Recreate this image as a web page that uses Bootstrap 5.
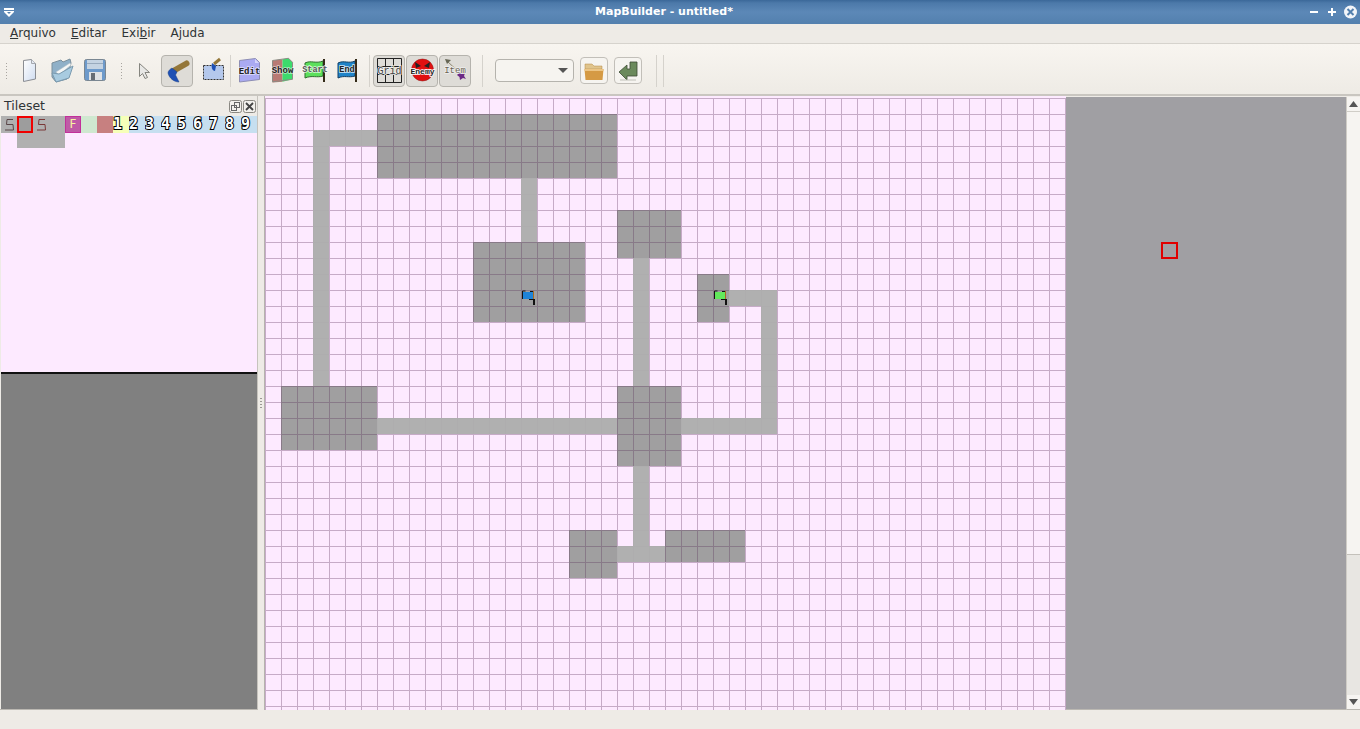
<!DOCTYPE html>
<html lang="pt-BR">
<head>
  <meta charset="UTF-8">
  <title>MapBuilder - untitled*</title>
  <link rel="stylesheet" href="https://cdn.jsdelivr.net/npm/bootstrap@5.3.0/dist/css/bootstrap.min.css">
  <style>
    html, body { height: 100%; overflow: hidden; }
    body { background: #eeebe6; color: #2e3436; font-family: "DejaVu Sans", sans-serif; font-size: 12px; }
    .app-shell { width: 1360px; height: 729px; }

    .title-bar { height: 24px; background: linear-gradient(#3b6899 0, #4c79a9 3px, #5c88b7 12px, #5380ae 24px); color: #fff; font-weight: 700; font-size: 11px; }
    .title-left { width: 18px; }
    .title-right { width: 50px; }
    .menu-bar { height: 20px; padding-left: 2.5px; border-bottom: 1px solid #d6d3cd; }
    .menu-item { padding: 0 7.5px; color: #2e3436; line-height: 19px; }

    .tool-bar { height: 52px; padding: 11px 0 8px 5px; background: linear-gradient(#f8f5f0, #eeebe5); border-bottom: 2px solid #c9c6c0; }
    .tool-bar text { font-family: "Liberation Mono", monospace; text-anchor: middle; stroke-width: 1.5px; paint-order: stroke; }
    .grip { width: 4px; height: 18px; margin-top: 1px; background-image: radial-gradient(#a8a5a0 0.7px, transparent 0.8px); background-size: 3px 3px; }
    .slot { width: 33px; height: 32px; flex: none; }
    .slot svg { display: block; }
    .slot-on { width: 32px; margin-right: 1px; background: #dedcd7; border: 1px solid #b5b3ad; border-radius: 4px; box-sizing: border-box; }
    .slot-on svg { margin: -1px; }
    .sep { width: 1px; height: 32px; background: #d5d2cc; flex: none; }
    .sep-edit { margin-left: 3px; margin-right: 3px; }
    .sep-grid { margin-left: 3px; margin-right: 3px; }
    .sep-combo { margin-left: 10px; margin-right: 12px; }
    .sep-last { margin-left: 14px; margin-right: 6px; }
    .combo-btn { width: 79px; height: 23px; flex: none; padding: 0 5px 0 0; background: #f6f4f0; border: 1px solid #b5b3ad; border-radius: 4px; font-size: 12px; color: #444; }
    .combo-btn:hover { background: #f6f4f0; border-color: #b5b3ad; }
    .combo-btn::after { border-top-color: #555; border-width: 5px 5px 0; margin: 0; }
    .tool-push { width: 28px; height: 27px; flex: none; margin-left: 6px; background: #f6f4f0; border: 1px solid #c2bfb9; border-radius: 4px; }

    .work-area { height: 614px; }
    .side-pane { width: 258px; flex: none; border-right: 1px solid #c6c3bd; border-bottom: 1px solid #bbb8b2; }
    .pane-head { height: 20px; padding: 0 1px 0 4px; font-size: 12.5px; }
    .pane-tiles { height: 258px; background: #fdeaff; margin-left: 1px; border-bottom: 2px solid #111; }
    .tile-row { height: 17px; background: #c6dff0; }
    .tile-cell { width: 16px; height: 17px; flex: none; font: 700 15px/17px "DejaVu Sans Mono", monospace; color: #fff; -webkit-text-stroke: 2px #000; paint-order: stroke fill; overflow: hidden; }
    .tile-grey { background: #b0b0b0; }
    .tile-picked { background: #9d9d9d; border: 2px solid #f00000; }
    .tile-f { background: #bf5aa6; border: 1px solid #c2309a; color: #f6f7a0; -webkit-text-stroke: 0; font: 400 12px/15px "DejaVu Sans", sans-serif; text-align: center; }
    .tile-green { background: #cfe8d0; }
    .tile-rose { background: #c78080; }
    .tile-yellow { background: #f6ffb8; }
    .tile-under { width: 48px; height: 15px; margin-left: 16px; background: #b0b0b0; }
    .pane-dark { background: #808080; margin-left: 1px; }
    .split-bar { width: 6px; flex: none; }
    .split-dots { width: 2px; height: 12px; background-image: radial-gradient(#9c9994 0.7px, transparent 0.8px); background-size: 2px 3px; }
    .map-box { width: 802px; flex: none; padding-top: 1px; border-left: 1px solid #b5b3ad; background: #fdeaff; }
    .map-box svg { display: block; margin-top: 1px; }
    .void-area { width: 280px; flex: none; margin-top: 1px; background: #a09fa3; border-bottom: 1px solid #bbb8b2; }
    .cursor-box { left: 95px; top: 145px; width: 17px; height: 17px; border: 2px solid #e00000; }
    .scroll-col { width: 14px; flex: none; margin-top: 1px; background: #e8e6e2; border-left: 1px solid #cfccc6; border-bottom: 1px solid #bbb8b2; }
    .scroll-end { height: 14px; background: #f6f4f1; }
    .scroll-thumb { height: 444px; background: #f6f4f1; border-top: 1px solid #d0cdc7; border-bottom: 1px solid #c4c1bb; }
    .status-bar { height: 19px; }
  </style>
</head>
<body>
<div class="app-shell d-flex flex-column">

  <!-- window title -->
  <div class="title-bar d-flex align-items-center">
    <div class="title-left d-flex justify-content-center">
      <svg width="10" height="9" viewBox="0 0 10 9"><path d="M0 0h10v2H0zM0 3h10v1L5 9 0 4z" fill="#fff"/><path d="M3 4h4L5 6z" fill="#5380ae"/></svg>
    </div>
    <div class="flex-grow-1 text-center">MapBuilder - untitled*</div>
    <div class="title-right d-flex align-items-center">
      <svg width="50" height="14" viewBox="0 0 50 14">
        <path d="M0 6h8v2H0zM18 6h8v2h-8zM21 3h2v8h-2z" fill="#fff"/>
        <circle cx="40.500" cy="7" r="6.500" fill="#f2f5f9"/>
        <path d="M37.500 4l6 6M43.500 4l-6 6" stroke="#5380ae" stroke-width="2"/>
      </svg>
    </div>
  </div>

  <!-- menu -->
  <nav class="menu-bar d-flex">
    <span class="menu-item"><u>A</u>rquivo</span>
    <span class="menu-item"><u>E</u>ditar</span>
    <span class="menu-item">Exi<u>b</u>ir</span>
    <span class="menu-item">A<u>j</u>uda</span>
  </nav>

  <!-- toolbar -->
  <div class="tool-bar d-flex align-items-center">
    <div class="grip"></div>
    <div class="slot ms-1">
      <svg width="33" height="32"><defs><linearGradient id="pg" x1="0" y1="0" x2="1" y2="1"><stop offset="0" stop-color="#fff"/><stop offset="1" stop-color="#cfdcf0"/></linearGradient></defs>
        <path d="M10.500 5.500l8-1 4 4v15.500l-12 2.500z" fill="url(#pg)" stroke="#8a8d93"/><path d="M18.500 4.500v4h4" fill="#e4e9f2" stroke="#a5a8ae"/></svg>
    </div>
    <div class="slot">
      <svg width="33" height="32"><path d="M6 8l9-3 2 2 7-3 1 4-4 16-11 3-4-5z" fill="#8fb0c8" stroke="#7b8f9c"/><path d="M10 17l14-9 1 2-12 10z" fill="#f4f6f6" stroke="#b5c0c6" stroke-width=".5"/><path d="M10 27l-4-9 7 1 14-8-4 12z" fill="#a8cbe0" stroke="#7b9bb0"/></svg>
    </div>
    <div class="slot">
      <svg width="33" height="32"><rect x="5.500" y="4.500" width="21" height="21" rx="2" fill="#6d9acb" stroke="#7a8792"/><rect x="8" y="5" width="16" height="9" fill="#c4d3e2"/><rect x="8" y="8" width="16" height="1" fill="#98aabd"/><rect x="10" y="17" width="13" height="8" fill="#dfe2e5"/><rect x="12" y="18" width="4" height="7" fill="#666d75"/></svg>
    </div>
    <div class="grip ms-2"></div>
    <div class="slot ms-1">
      <svg width="33" height="32"><path d="M11.500 8.500v13l3-3 2.500 5 2.500-1-2.500-5h4.500z" fill="#e8e8e6" stroke="#85857f"/></svg>
    </div>
    <div class="slot slot-on">
      <svg width="32" height="32"><path d="M25.500 8.500L14 15" stroke="#94773a" stroke-width="6" stroke-linecap="round"/><path d="M11 13l5 4-1.500 3 3.500 7c-5 0-10-4-11-9 0-2 2-4 4-5z" fill="#1e50b4" stroke="#173f8a" stroke-width=".5"/></svg>
    </div>
    <div class="slot">
      <svg width="33" height="32"><rect x="9.500" y="10.500" width="20" height="14" fill="#b4c8ec" stroke="#333" stroke-dasharray="2 1"/><path d="M26 4l-6 5" stroke="#94773a" stroke-width="3"/><path d="M18 8l4 3-1 5c-3 0-4-4-3-8z" fill="#1e50b4"/></svg>
    </div>
    <div class="sep sep-edit"></div>
    <div class="slot">
      <svg width="33" height="32"><path d="M5.500 5.500l16-2 4 4v17l-20 2.500z" fill="#aaaaf2" stroke="#8e8eb4"/><path d="M21 4v4h4z" fill="#d4d4fa"/><text x="15.500" y="19" font-size="9" font-weight="700" fill="#222" stroke="#fff" stroke-opacity=".6">Edit</text></svg>
    </div>
    <div class="slot">
      <svg width="33" height="32"><path d="M5.500 5.500l10-1.200v22.400l-10 .8z" fill="#b87a74"/><path d="M15.500 4.300l6-1 4 4v17l-10 2.400z" fill="#3ddb6c"/><path d="M5.500 5.500l16-2.200 4 4v17l-20 2.500z" fill="none" stroke="#8c8c84"/><text x="15.500" y="18" font-size="9" font-weight="700" fill="#222" stroke="#fff" stroke-opacity=".6">Show</text></svg>
    </div>
    <div class="slot">
      <svg width="33" height="32"><path d="M5 8c6-3 11 1 18-2v15c-6 2-11-1-18 2z" fill="#5ce05c" stroke="#2e6c2e"/><rect x="23" y="4" width="2" height="23" fill="#332a18"/><text x="15" y="17" font-size="8.500" font-weight="700" fill="#555" stroke="#fff" stroke-opacity=".8">Start</text></svg>
    </div>
    <div class="slot">
      <svg width="33" height="32"><path d="M5 8c6-3 11 1 17-2v15c-6 2-11-1-17 2z" fill="#1f83c8" stroke="#123e62"/><rect x="22" y="4" width="2" height="23" fill="#332a18"/><text x="14" y="17" font-size="8.500" font-weight="700" fill="#222" stroke="#fff" stroke-opacity=".8">End</text></svg>
    </div>
    <div class="sep sep-grid"></div>
    <div class="slot slot-on">
      <svg width="32" height="32"><path d="M4.500 3.500h24v24h-24zM4.500 11.500h24M4.500 19.500h24M12.500 3.500v24M20.500 3.500v24" fill="none" stroke="#222"/><text x="16.500" y="18.500" font-size="10" fill="#444" stroke="#eee">Grid</text></svg>
    </div>
    <div class="slot slot-on">
      <svg width="32" height="32"><circle cx="16.500" cy="15" r="11" fill="#e01010" stroke="#8a1010" stroke-width=".5"/><path d="M9 7l6 4-5 2zM24 7l-6 4 5 2z" fill="#222"/><text x="16.500" y="19" font-size="8" font-weight="700" fill="#222" stroke="#fff">Enemy</text></svg>
    </div>
    <div class="slot slot-on">
      <svg width="32" height="32"><path d="M8 6l16 15" stroke="#8b8670"/><path d="M6 4l6 1-4 4z" fill="#665"/><path d="M20 18l3 1 3-1-1 3 2 3-3-1-3 2-.5-3-2.500-2z" fill="#6c2a86"/><text x="16" y="18" font-size="9" fill="#6a6250" stroke="#eee">Item</text></svg>
    </div>
    <div class="sep sep-combo"></div>
    <button class="btn combo-btn dropdown-toggle d-flex align-items-center justify-content-end" type="button"></button>
    <div class="tool-push d-flex align-items-center justify-content-center">
      <svg width="22" height="20"><path d="M2 3h7l2 2h8v3H2z" fill="#e0c48c" stroke="#b58a44" stroke-width=".5"/><path d="M1.500 8h19l-1 11h-17z" fill="#d59a44"/><path d="M1.500 8h19v2h-19z" fill="#ecc585"/></svg>
    </div>
    <div class="tool-push d-flex align-items-center justify-content-center">
      <svg width="22" height="22"><path d="M2 12l8-7v4h3V2h7v14H10v4z" fill="#6b8a5c" stroke="#3c4a34" stroke-width=".8"/><path d="M3 20h16" stroke="#c0c0b8"/></svg>
    </div>
    <div class="sep sep-last"></div>
    <div class="sep"></div>
  </div>

  <!-- main area -->
  <div class="work-area d-flex">
    <aside class="side-pane d-flex flex-column">
      <div class="pane-head d-flex align-items-center justify-content-between">
        <span>Tileset</span>
        <svg width="27" height="13" viewBox="0 0 27 13">
          <rect x=".5" y=".5" width="12" height="12" rx="2" fill="#f2f0ec" stroke="#8a8882"/>
          <rect x="2.500" y="5.500" width="5" height="5" fill="none" stroke="#666"/><rect x="5.500" y="2.500" width="5" height="5" fill="none" stroke="#666"/>
          <rect x="14.500" y=".5" width="12" height="12" rx="2" fill="#f2f0ec" stroke="#8a8882"/>
          <path d="M17 3l7 7M24 3l-7 7" stroke="#444" stroke-width="1.800"/>
        </svg>
      </div>
      <div class="pane-tiles">
        <div class="tile-row d-flex">
          <div class="tile-cell tile-grey"><svg width="16" height="17"><path d="M12 3.500H6l-.5 5h6.500l.5 5.500H4" fill="none" stroke="#5a4648"/></svg></div>
          <div class="tile-cell tile-picked"></div>
          <div class="tile-cell tile-grey"><svg width="16" height="17"><path d="M12 3.500H6l-.5 5h6.500l.5 5.500H4" fill="none" stroke="#7a3838"/></svg></div>
          <div class="tile-cell tile-grey"></div>
          <div class="tile-cell tile-f">F</div>
          <div class="tile-cell tile-green"></div>
          <div class="tile-cell tile-rose"></div>
          <div class="tile-cell tile-yellow">1</div>
          <div class="tile-cell">2</div>
          <div class="tile-cell">3</div>
          <div class="tile-cell">4</div>
          <div class="tile-cell">5</div>
          <div class="tile-cell">6</div>
          <div class="tile-cell">7</div>
          <div class="tile-cell">8</div>
          <div class="tile-cell">9</div>
        </div>
        <div class="tile-under"></div>
      </div>
      <div class="pane-dark flex-grow-1"></div>
    </aside>

    <div class="split-bar d-flex align-items-center justify-content-center">
      <div class="split-dots"></div>
    </div>

    <div class="map-box">
      <svg width="801" height="612" viewBox="0 0 801 612">
        <defs>
          <pattern id="cell" width="16" height="16" patternUnits="userSpaceOnUse">
            <path d="M0 0h16v1H1v15H0z" fill="#5a325a" fill-opacity=".34"/>
          </pattern>
        </defs>
        <g fill="#a09fa0">
          <rect x="112" y="16" width="240" height="64"/>
          <rect x="208" y="144" width="112" height="80"/>
          <rect x="352" y="112" width="64" height="48"/>
          <rect x="432" y="176" width="32" height="48"/>
          <rect x="16" y="288" width="96" height="64"/>
          <rect x="352" y="288" width="64" height="80"/>
          <rect x="304" y="432" width="48" height="48"/>
          <rect x="400" y="432" width="80" height="32"/>
        </g>
        <rect width="801" height="612" fill="url(#cell)"/>
        <g fill="#adadad" fill-opacity=".96">
          <rect x="48" y="32" width="16" height="256"/>
          <rect x="64" y="32" width="48" height="16"/>
          <rect x="256" y="80" width="16" height="64"/>
          <rect x="368" y="160" width="16" height="128"/>
          <rect x="464" y="192" width="48" height="16"/>
          <rect x="496" y="208" width="16" height="128"/>
          <rect x="416" y="320" width="80" height="16"/>
          <rect x="112" y="320" width="240" height="16"/>
          <rect x="368" y="368" width="16" height="80"/>
          <rect x="352" y="448" width="48" height="16"/>
        </g>
        <g>
          <path d="M257.500 201v-8h3M265 193.500h3.500" fill="none" stroke="#111"/>
          <rect x="258" y="194" width="10" height="7" fill="#1f83d8"/>
          <path d="M264 201.500h5" stroke="#111"/>
          <rect x="268" y="193" width="1" height="8" fill="#a86a20"/>
          <rect x="268" y="201" width="2" height="6" fill="#111"/>
          <path d="M449.500 201v-8h3M457 193.500h3.500" fill="none" stroke="#111"/>
          <rect x="450" y="194" width="10" height="7" fill="#62e85c"/>
          <path d="M456 201.500h5" stroke="#111"/>
          <rect x="460" y="193" width="1" height="8" fill="#a86a20"/>
          <rect x="460" y="201" width="2" height="6" fill="#111"/>
        </g>
      </svg>
    </div>

    <div class="void-area position-relative">
      <div class="cursor-box position-absolute"></div>
    </div>

    <div class="scroll-col d-flex flex-column">
      <div class="scroll-end d-flex align-items-center justify-content-center">
        <svg width="9" height="6"><path d="M0 6L4.500 0 9 6z" fill="#555"/></svg>
      </div>
      <div class="scroll-thumb"></div>
      <div class="flex-grow-1"></div>
      <div class="scroll-end d-flex align-items-center justify-content-center">
        <svg width="9" height="6"><path d="M0 0L4.500 6 9 0z" fill="#555"/></svg>
      </div>
    </div>
  </div>

  <div class="status-bar"></div>
</div>
<script src="https://cdn.jsdelivr.net/npm/bootstrap@5.3.0/dist/js/bootstrap.bundle.min.js"></script>
</body>
</html>
